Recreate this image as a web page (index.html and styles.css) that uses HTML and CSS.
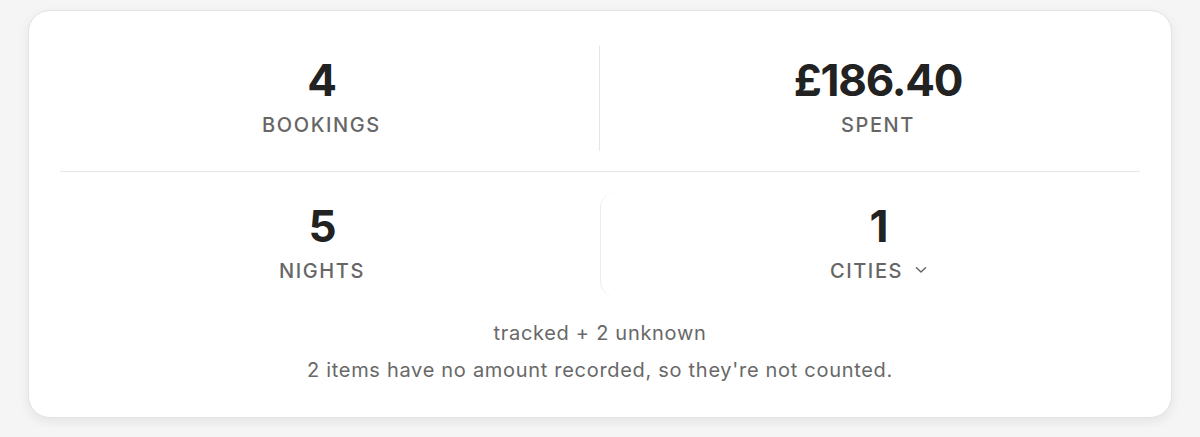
FILE: index.html
```html
<!DOCTYPE html>
<html lang="en">
<head>
    <meta charset="UTF-8">
    <meta name="viewport" content="width=device-width, initial-scale=1.0">
    <title>Trip summary</title>
    <link rel="stylesheet" href="styles.css">
</head>
<body>

    <div class="summary-card">
        <!-- top row -->
        <div class="stat-row">
            <div class="stat stat-left">
                <div class="stat-value">4</div>
                <div class="stat-label">Bookings</div>
            </div>
            <div class="stat">
                <div class="stat-value">£186.40</div>
                <div class="stat-label">Spent</div>
            </div>
        </div>

        <div class="row-divider"></div>

        <!-- bottom row -->
        <div class="stat-row">
            <div class="stat">
                <div class="stat-value">5</div>
                <div class="stat-label">Nights</div>
            </div>
            <button class="stat stat-toggle" type="button">
                <span class="stat-value">1</span>
                <span class="stat-label">Cities
                    <svg class="chevron" width="12" height="8" viewBox="0 0 12 8" aria-hidden="true">
                        <path d="M1.5 1.8 L6 6 L10.5 1.8" fill="none" stroke="currentColor" stroke-width="1.5" stroke-linecap="round" stroke-linejoin="round"/>
                    </svg>
                </span>
            </button>
        </div>

        <div class="notes">
            <p>tracked + 2 unknown</p>
            <p>2 items have no amount recorded, so they're not counted.</p>
        </div>
    </div>

</body>
</html>
```

FILE: styles.css
```css
/* page */
body {
    font-family: 'Inter', 'Liberation Sans', sans-serif;
    margin: 0;
    padding: 10px 28px;
    background: #f5f5f5;
}

.summary-card {
    background-color: white;
    border: 1px solid #e4e4e4;
    border-radius: 22px;
    box-shadow: 0 4px 12px rgba(0, 0, 0, 0.07);
    padding: 35px 15px 34px;
}

/* stat grid */
.stat-row {
    display: grid;
    grid-template-columns: 1fr 1fr;
}

.stat {
    display: flex;
    flex-direction: column;
    align-items: center;
    padding: 8px 0 14px;
}

.stat-left {
    border-right: 1px solid #e6e6e6;
}

.stat-value {
    font-size: 44px;
    line-height: 52px;
    font-weight: 700;
    letter-spacing: -1.2px;
    color: #222;
}

.stat-label {
    margin-top: 7px;
    font-size: 20px;
    line-height: 24px;
    font-weight: 500;
    letter-spacing: 1.6px;
    text-transform: uppercase;
    color: #666;
    display: flex;
    align-items: center;
    gap: 12px;
}

/* cities button */
.stat-toggle {
    font-family: inherit;
    background: none;
    border: none;
    border-left: 1px solid #ececec;
    border-radius: 16px;
    cursor: pointer;
    margin: 0;
}

.chevron { color: #666; margin-top: -2px; }

.row-divider {
    height: 1px;
    background: #e6e6e6;
    margin: 20px 16px;
}

/* footnotes */
.notes {
    text-align: center;
    margin-top: 23px;
}
.notes p {
    margin: 0;
    font-size: 20px;
    line-height: 26px;
    letter-spacing: 0.7px;
    color: #686868;
}
.notes p + p { margin-top: 11px; }
```
